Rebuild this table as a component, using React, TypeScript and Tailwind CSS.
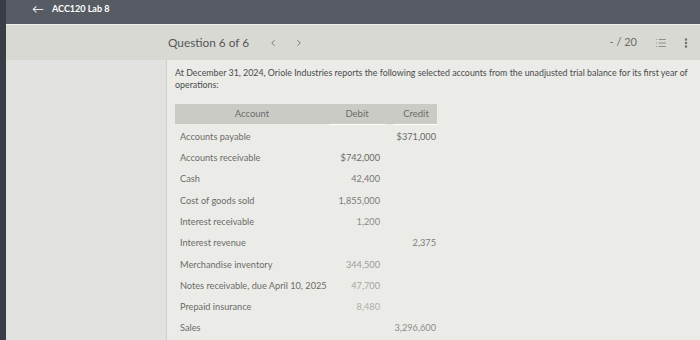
import { ChevronLeft, ChevronRight, List, EllipsisVertical } from "lucide-react";

const rows = [
  { name: "Accounts payable", debit: "", credit: "$371,000", tone: "text-[#6a6a68]" },
  { name: "Accounts receivable", debit: "$742,000", credit: "", tone: "text-[#6a6a68]" },
  { name: "Cash", debit: "42,400", credit: "", tone: "text-[#777775]" },
  { name: "Cost of goods sold", debit: "1,855,000", credit: "", tone: "text-[#7c7c7a]" },
  { name: "Interest receivable", debit: "1,200", credit: "", tone: "text-[#8c8c8a]" },
  { name: "Interest revenue", debit: "", credit: "2,375", tone: "text-[#7e7e7c]" },
  { name: "Merchandise inventory", debit: "344,500", credit: "", tone: "text-[#9c9c98]" },
  { name: "Notes receivable, due April 10, 2025", debit: "47,700", credit: "", tone: "text-[#a4a4a0]" },
  { name: "Prepaid insurance", debit: "8,480", credit: "", tone: "text-[#b0b0ac]" },
  { name: "Sales", debit: "", credit: "3,296,600", tone: "text-[#8c8c88]" },
];

export default function App() {
  return (
    <div className="w-[700px] h-[340px] overflow-hidden flex bg-[#3f434b] font-['Lato','Open_Sans',sans-serif]">
      <div className="w-[6px] shrink-0 bg-[#3a3d45]" />
      <div className="flex-1 flex flex-col">
        {/* top bar */}
        <div className="h-[24px] shrink-0 bg-[#575b64] flex items-center pl-[26px] gap-[8px] text-white">
          <span className="text-[12px] leading-none -mt-[7px]">←</span>
          <span className="text-[9px] font-bold -mt-[7px]">ACC120 Lab 8</span>
        </div>

        {/* question header */}
        <div className="h-[36px] shrink-0 bg-[#d9d9d3] border-t border-[#eeeeea] flex items-center pl-[162px] pr-[8px] text-[#55575a]">
          <span className="text-[11.8px]">Question 6 of 6</span>
          <ChevronLeft className="ml-[19px] w-[10px] h-[10px] text-[#666]" strokeWidth={2} />
          <ChevronRight className="ml-[16px] w-[10px] h-[10px] text-[#666]" strokeWidth={2} />
          <span className="ml-auto text-[11px] text-[#6a6b6d]">- / 20</span>
          <List className="ml-[18px] w-[12px] h-[12px] text-[#7a7b80]" strokeWidth={1.6} />
          <EllipsisVertical className="ml-[13px] w-[12px] h-[12px] text-[#6a6b70]" strokeWidth={3} />
        </div>

        {/* body */}
        <div className="flex-1 flex">
          <div className="w-[161px] shrink-0 bg-[#e2e3e0] border-r border-[#cfd0cc]" />
          <div className="flex-1 bg-[#ebebe8] pl-[8px] pr-[10px] pt-[7px]">
            <p className="text-[8.85px] leading-[12px] text-[#4a4b4c]">
              At December 31, 2024, Oriole Industries reports the following selected accounts from the unadjusted trial balance for its first year of operations:
            </p>

            <div className="mt-[13px] w-[262px] text-[9.5px]">
              <div className="grid grid-cols-[154px_56px_52px] h-[20px] items-center bg-[#cacbc5] text-[#6c6d6b]">
                <span className="text-center">Account</span>
                <span className="text-center">Debit</span>
                <span className="text-center pl-[10px]">Credit</span>
              </div>
              <div className="grid grid-cols-[154px_56px_52px] h-[1px]">
                <span />
                <span className="bg-white" />
                <span className="bg-white ml-[8px]" />
              </div>
              <div className="flex flex-col pt-[1px]">
                {rows.map((row) => (
                  <div
                    key={row.name}
                    className="grid grid-cols-[154px_56px_52px] h-[21.3px] items-center whitespace-nowrap"
                  >
                    <span className="pl-[5px] text-[9.2px] text-[#6b6b69]">{row.name}</span>
                    <span className={`text-right pr-[5px] text-[9.2px] ${row.tone}`}>{row.debit}</span>
                    <span className={`text-right pr-[1px] text-[9.2px] ${row.tone}`}>{row.credit}</span>
                  </div>
                ))}
              </div>
            </div>
          </div>
        </div>
      </div>
    </div>
  );
}
